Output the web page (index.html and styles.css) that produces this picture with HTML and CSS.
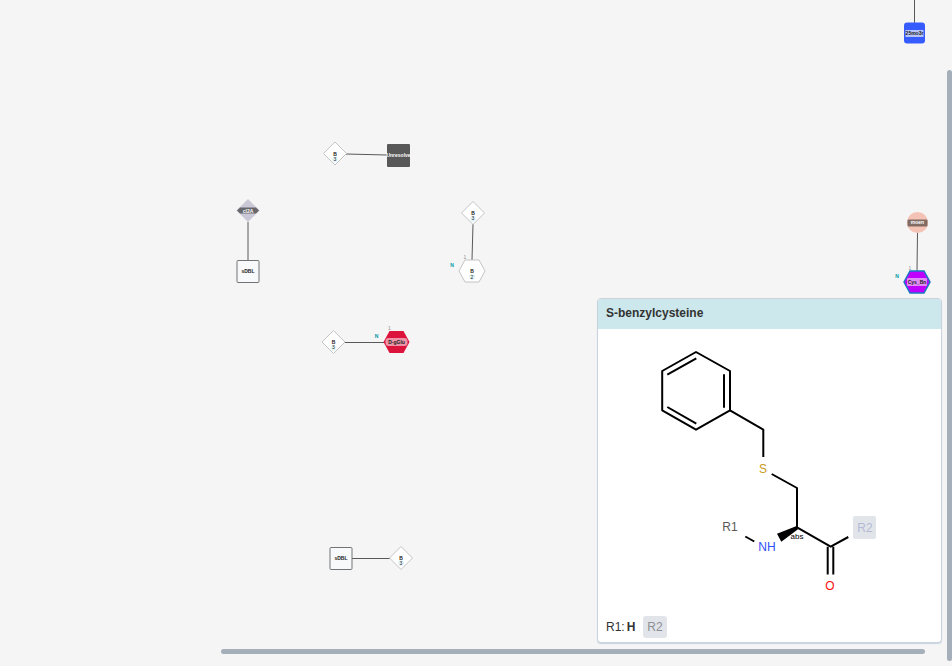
FILE: index.html
```
<!DOCTYPE html>
<html lang="en">
<head>
<meta charset="utf-8">
<title>Macromolecule canvas</title>
<link rel="stylesheet" href="styles.css">
</head>
<body>
<main class="editor">
  <svg class="canvas" role="img" aria-label="Monomer canvas">
    <defs>
      <path id="diamond" d="M0 -11.5L11.5 0L0 11.5L-11.5 0Z"/>
      <path id="hexagon" d="M-13 0L-7 -11H7L13 0L7 11H-7Z"/>
      <rect id="square" x="-11" y="-11" width="22" height="22" rx="1"/>
    </defs>
    <g class="bonds">
      <path d="M346 154L387 155M248 222V260M473 224L472 260M345 342.500H384M352 558.500H390M914.500 0V23M917.500 233L917 271"/>
    </g>

    <g transform="translate(335 153.500)">
      <use href="#diamond" class="blank"/>
      <circle class="count-bg" cy="6" r="3"/><text class="name" y="2">B</text><text class="count" y="7">3</text>
    </g>
    <g transform="translate(398.500 155.500)">
      <rect class="unresolved" x="-11.500" y="-11.500" width="23" height="23" rx="1"/>
      <text class="name light" y="1">Unresolve</text>
    </g>

    <g transform="translate(248 210.500)">
      <use href="#diamond" class="lavender"/>
      <path class="plate" d="M-8 -3H8L11 0L8 3H-8L-11 0Z"/>
      <text class="name light" y="2">cl2A</text>
    </g>
    <g transform="translate(248 271.500)">
      <use href="#square" class="base"/>
      <text class="name" y="1">sDBL</text>
    </g>

    <g transform="translate(473 213)">
      <use href="#diamond" class="blank"/>
      <circle class="count-bg" cy="6" r="3"/><text class="name" y="2">B</text><text class="count" y="7">3</text>
    </g>
    <g transform="translate(472 271)">
      <use href="#hexagon" class="blank"/>
      <circle class="count-bg" cy="6" r="3"/><text class="name" y="2">B</text><text class="count" y="8">2</text>
      <text class="order" x="-7" y="-12">1</text><text class="terminus" x="-20" y="-4">N</text>
    </g>

    <g transform="translate(333.500 342)">
      <use href="#diamond" class="blank"/>
      <circle class="count-bg" cy="6" r="3"/><text class="name" y="2">B</text><text class="count" y="7">3</text>
    </g>
    <g transform="translate(396.500 342)">
      <use href="#hexagon" class="crimson"/>
      <rect class="plate-soft" x="-11" y="-4" width="22" height="8" rx="3"/>
      <text class="name" y="2">D-gGlu</text>
      <text class="order" x="-7" y="-12">1</text><text class="terminus" x="-20" y="-4">N</text>
    </g>

    <g transform="translate(341 558.500)">
      <use href="#square" class="base"/>
      <text class="name" y="1">sDBL</text>
    </g>
    <g transform="translate(401 558)">
      <use href="#diamond" class="blank"/>
      <circle class="count-bg" cy="5" r="3"/><text class="name" y="2">B</text><text class="count" y="7">3</text>
    </g>

    <g transform="translate(914.500 33)">
      <rect class="blue" x="-10.500" y="-10.500" width="21" height="21" rx="3"/>
      <rect class="plate-blue" x="-9" y="-3" width="18" height="7"/>
      <text class="name" y="2">25mo3r</text>
    </g>
    <g transform="translate(917.500 222.500)">
      <circle class="peach" r="10.500"/>
      <rect class="plate-brown" x="-10" y="-3" width="20" height="7" rx="1"/>
      <text class="name light" y="1">moen</text>
    </g>
    <g transform="translate(917 282)">
      <use href="#hexagon" class="violet"/>
      <rect class="plate-violet" x="-10" y="-4" width="20" height="8" rx="1"/>
      <text class="name" y="2">Cys_Bn</text>
      <text class="order" x="-7" y="-12">1</text><text class="terminus" x="-20" y="-4">N</text>
    </g>
  </svg>

  <div class="track-x"><div class="thumb-x"></div></div>
  <div class="track-y"><div class="thumb-y"></div></div>

  <section class="preview" aria-labelledby="preview-title">
    <h1 class="preview-title" id="preview-title">S-benzylcysteine</h1>
    <svg class="structure" viewBox="598 329 343 283" role="img" aria-label="Structure of S-benzylcysteine">
      <g class="skeleton">
        <path d="M696 352L730 371V410.300L696 429.700L662.200 410.300V371ZM696.300 358.300L667.300 374.700M667.300 407L696.300 423.700M724 374.300V407.700"/>
        <path d="M730 410.300L763.300 429.700V457M771.700 474L797 488V527.300L830.700 546.700L848.300 537M827.700 546.700V574.500M833.300 546.700V574.500M745.300 536.500L754.300 541.500"/>
      </g>
      <path class="wedge" d="M796 526.300L777 533.700L781.300 541.800L798 529.300Z"/>
      <text class="atom sulfur" x="763" y="473">S</text>
      <text class="atom nitrogen" x="767" y="551">NH</text>
      <text class="atom oxygen" x="830" y="590">O</text>
      <text class="atom leaving" x="730" y="531">R1</text>
      <rect class="point" x="853" y="516" width="23" height="23" rx="2"/>
      <text class="atom attach" x="865" y="532">R2</text>
      <text class="stereo" x="797" y="539">abs</text>
    </svg>
    <div class="groups">
      <span class="group">R1:<b>H</b></span>
      <span class="badge">R2</span>
    </div>
  </section>
</main>
</body>
</html>
```

FILE: styles.css
```
* { box-sizing: border-box; }

body {
  margin: 0;
  background: #f5f5f5;
  font-family: "Liberation Sans", Arial, sans-serif;
  color: #333;
}

.editor {
  position: relative;
  height: 100vh;
  overflow: hidden;
}

.canvas {
  display: block;
  width: 100%;
  height: 100%;
}

.bonds { fill: none; stroke: #585858; stroke-width: 1; }
.blank { fill: #fff; stroke: #c4c4c4; stroke-width: 1; }
.base { fill: #f8f9fa; stroke: #707476; stroke-width: 1; }
.unresolved { fill: #585858; }
.lavender { fill: #cac7d6; }
.crimson { fill: #dc143c; }
.blue { fill: #365cff; }
.peach { fill: #f5c3b5; }
.violet { fill: #bf00ff; stroke: #167ac2; stroke-width: 1.5; }

.plate { fill: #68686c; }
.plate-soft { fill: #ee93a7; }
.plate-blue { fill: #b7c3fa; }
.plate-brown { fill: #826b63; }
.plate-violet { fill: #df8cf5; }

.name {
  font-size: 5px;
  font-weight: 700;
  text-anchor: middle;
  fill: #222;
}
.name.light { fill: #fff; }

.count-bg { fill: #e4f5f7; }
.count, .order { font-size: 5px; text-anchor: middle; fill: #222; }
.order { fill: #8f8f8f; }
.terminus {
  font-size: 5px;
  font-weight: 700;
  text-anchor: middle;
  fill: #0097a8;
}

.track-x {
  position: absolute;
  right: 27px;
  bottom: 12px;
  left: 221px;
}
.thumb-x {
  height: 5px;
  border-radius: 3px;
  background: #a5afb9;
}

.track-y {
  position: absolute;
  top: 70px;
  right: 0;
  bottom: 5px;
  width: 5px;
}
.thumb-y {
  height: 100%;
  border-radius: 3px;
  background: #a5afb9;
}

.preview {
  position: absolute;
  top: 298px;
  right: 10px;
  width: 345px;
  overflow: hidden;
  border: 1px solid #cad3dd;
  border-radius: 4px;
  background: #fff;
  box-shadow: 0 1px 1px #cad3dd;
}

.preview-title {
  margin: 0;
  padding: 6px 8px 8px;
  background: #cce8ec;
  font-size: 12px;
  line-height: 16px;
}

.structure { display: block; width: 100%; }

.skeleton {
  fill: none;
  stroke: #000;
  stroke-width: 2;
  stroke-linejoin: round;
}
.wedge { fill: #000; }
.atom { font-size: 12px; text-anchor: middle; }
.sulfur { fill: #c99a19; }
.nitrogen { fill: #304ff7; }
.oxygen { fill: #ff0d0d; }
.leaving { fill: #585858; }
.point { fill: #e1e5ea; }
.attach { fill: #b4b9d6; }
.stereo { font-size: 8px; text-anchor: middle; }

.groups {
  display: flex;
  align-items: center;
  gap: 8px;
  padding: 4px 8px;
  font-size: 12px;
  line-height: 22px;
}
.group { display: flex; gap: 2px; }
.badge {
  padding: 0 4px;
  border-radius: 3px;
  background: #e1e5ea;
  color: #8c8f94;
}
```
